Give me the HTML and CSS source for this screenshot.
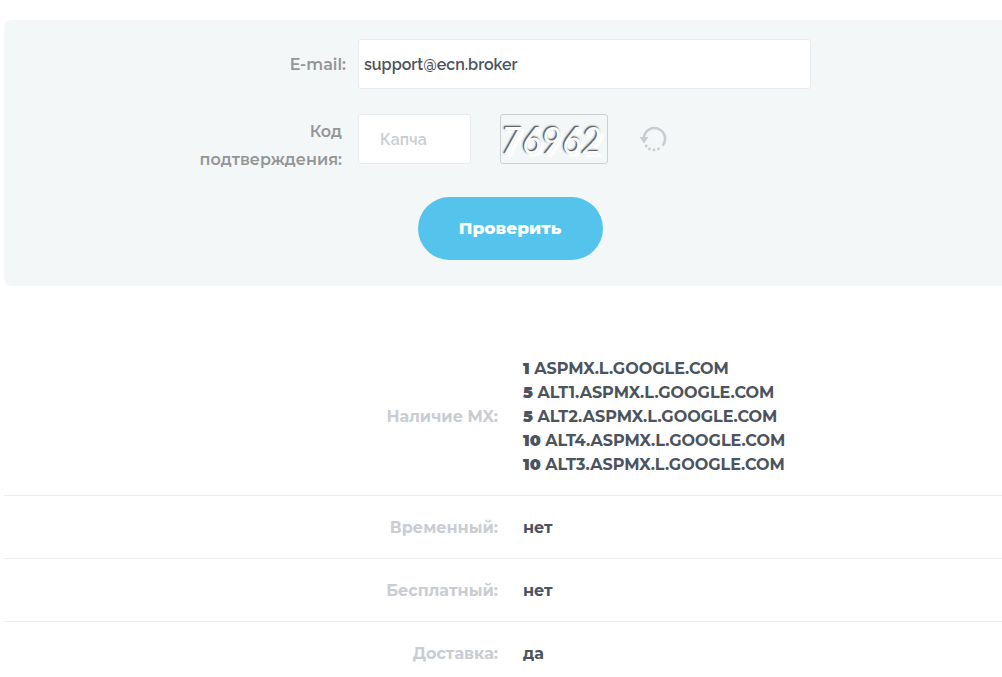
FILE: index.html
```html
<!DOCTYPE html>
<html lang="ru">
<head>
  <meta charset="UTF-8" />
  <meta name="viewport" content="width=device-width, initial-scale=1.0" />
  <title>Проверка e-mail</title>
  <link rel="stylesheet" href="styles.css">
</head>
<body>
  <form class="check-form">
    <div class="form-row">
      <label class="email-label" for="email">E-mail:</label>
      <input type="text" id="email" value="support@ecn.broker" />
    </div>
    <div class="form-row">
      <label class="code-label" for="captcha">Код подтверждения:</label>
      <div class="captcha">
        <input type="text" id="captcha" placeholder="Капча" />
        <div class="captcha-image">76962</div>
        <button type="button" class="refresh" aria-label="Обновить">
          <svg width="28" height="28" viewBox="0 0 28 28" fill="none">
            <path d="M5 12 A10.600 10.600 0 1 1 23.600 20.500" stroke="#c9cdd3" stroke-width="2.600" />
            <path d="M0.500 12 L9.500 12 L5 18.500 Z" fill="#c9cdd3" />
            <g fill="#c9cdd3">
              <circle cx="7.200" cy="21" r="1.400" />
              <circle cx="10.500" cy="24" r="1.400" />
              <circle cx="15" cy="25" r="1.400" />
              <circle cx="19.500" cy="24" r="1.400" />
            </g>
          </svg>
        </button>
      </div>
    </div>
    <button type="submit" class="submit">Проверить</button>
  </form>

  <table class="results">
    <tr>
      <th scope="row">Наличие MX:</th>
      <td class="mx">
        <b>1</b> ASPMX.L.GOOGLE.COM<br>
        <b>5</b> ALT1.ASPMX.L.GOOGLE.COM<br>
        <b>5</b> ALT2.ASPMX.L.GOOGLE.COM<br>
        <b>10</b> ALT4.ASPMX.L.GOOGLE.COM<br>
        <b>10</b> ALT3.ASPMX.L.GOOGLE.COM
      </td>
    </tr>
    <tr>
      <th scope="row">Временный:</th>
      <td>нет</td>
    </tr>
    <tr>
      <th scope="row">Бесплатный:</th>
      <td>нет</td>
    </tr>
    <tr>
      <th scope="row">Доставка:</th>
      <td>да</td>
    </tr>
  </table>
</body>
</html>
```
FILE: styles.css
```css
* {
  box-sizing: border-box;
}
body {
  margin: 0;
  padding: 20px 0 0 4px;
  background: #fff;
  color: #4b535d;
  font-family: Montserrat, Inter, "Open Sans", sans-serif;
  font-size: 16px;
  line-height: 24px;
}
input, button {
  font-family: inherit;
  font-size: 16px;
}
.check-form {
  display: flex;
  flex-direction: column;
  padding: 19px 0 26px;
  background: #f3f7f8;
  border-radius: 8px 0 0 8px;
}
.form-row {
  display: grid;
  grid-template-columns: 354fr 453fr 191fr;
  align-items: start;
  margin-bottom: 25px;
}
.form-row + .form-row {
  margin-bottom: 23px;
}
label {
  color: #939596;
  font-weight: 600;
  line-height: 28px;
  text-align: right;
}
.email-label {
  padding: 12px 12px 0 0;
}
.code-label {
  padding: 4px 16px 0 160px;
}
input {
  width: 100%;
  height: 50px;
  padding: 0 5px;
  border: 1px solid #e9ecee;
  border-radius: 3px;
  background: #fff;
  color: #4b535d;
  font-family: Raleway, Montserrat, sans-serif;
  font-weight: 600;
}
.captcha {
  display: flex;
  align-items: center;
}
.captcha input {
  width: 113px;
  padding: 0 21px;
}
.captcha input::placeholder {
  color: #c9cdd3;
  opacity: 1;
}
.captcha-image {
  width: 108px;
  height: 50px;
  margin: 0 31px 0 29px;
  border: 1px solid #cdd0d3;
  border-radius: 3px;
  color: #fafcfc;
  font-family: Lato, sans-serif;
  font-size: 36px;
  font-style: italic;
  line-height: 50px;
  text-shadow: -1px -1px 0 #666, -1px -1px 2px #333, 2px 2px 1px #fff, 3px 3px 2px #fff;
}
.refresh {
  display: flex;
  padding: 0;
  border: 0;
  background: none;
  cursor: pointer;
}
.submit {
  align-self: center;
  width: 185px;
  height: 63px;
  margin-left: 14px;
  padding-bottom: 3px;
  border: 0;
  border-radius: 32px;
  background: #54c4ec;
  color: #fff;
  font-size: 17px;
  font-weight: 800;
  cursor: pointer;
}
.results {
  width: 100%;
  margin-top: 51px;
  border-collapse: collapse;
}
.results th, .results td {
  width: 50%;
  padding: 20px 20px 18px;
  text-align: left;
  font-weight: 700;
}
.results th {
  padding-right: 5px;
  color: #c9cdd3;
  text-align: right;
}
.results tr + tr {
  border-top: 1px solid #ededed;
}
.results .mx b {
  font-weight: 900;
}
```
